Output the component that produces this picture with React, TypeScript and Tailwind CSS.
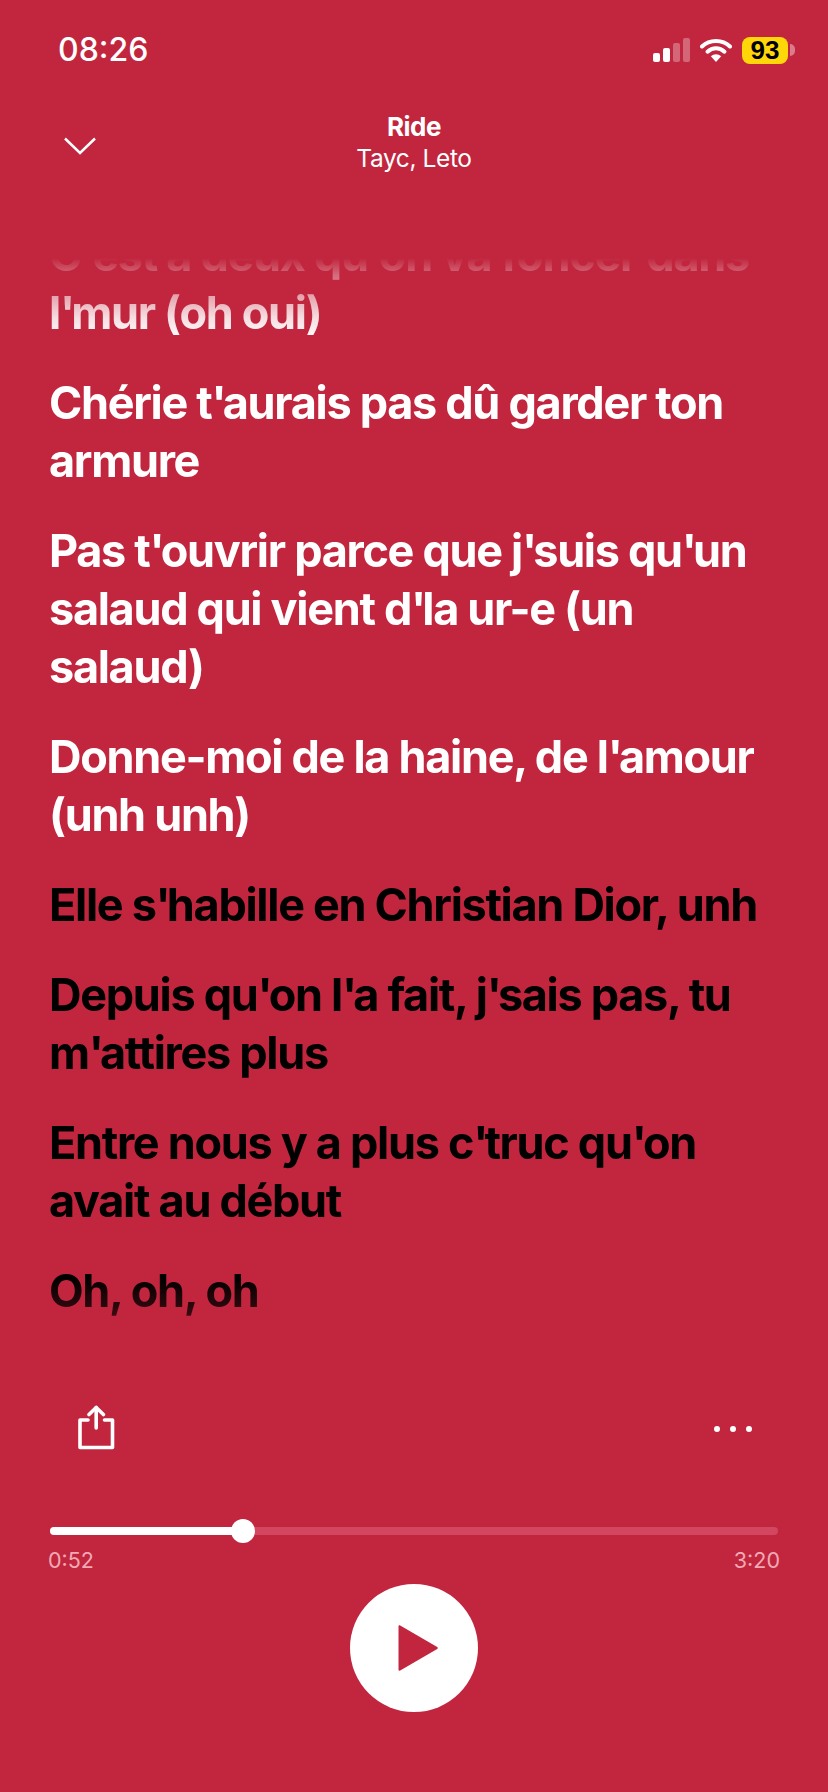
const lyrics: { lines: string[]; sung: boolean }[] = [
  { lines: ["C'est à deux qu'on va foncer dans", "l'mur (oh oui)"], sung: true },
  { lines: ["Chérie t'aurais pas dû garder ton", "armure"], sung: true },
  { lines: ["Pas t'ouvrir parce que j'suis qu'un", "salaud qui vient d'la ur-e (un", "salaud)"], sung: true },
  { lines: ["Donne-moi de la haine, de l'amour", "(unh unh)"], sung: true },
  { lines: ["Elle s'habille en Christian Dior, unh"], sung: false },
  { lines: ["Depuis qu'on l'a fait, j'sais pas, tu", "m'attires plus"], sung: false },
  { lines: ["Entre nous y a plus c'truc qu'on", "avait au début"], sung: false },
  { lines: ["Oh, oh, oh"], sung: false },
];

function StatusBar() {
  return (
    <div className="h-[76px] pt-6 pl-[58px] pr-[33px] flex items-center justify-between shrink-0">
      <span className="text-[32px] leading-none font-medium text-white font-['Inter',sans-serif]">08:26</span>
      <div className="flex items-center">
        <div className="flex items-end gap-[3px] h-[23px]">
          <div className="w-[7px] h-[9px] rounded-[2px] bg-white" />
          <div className="w-[7px] h-[14px] rounded-[2px] bg-white" />
          <div className="w-[7px] h-[19px] rounded-[2px] bg-white/30" />
          <div className="w-[7px] h-[24px] rounded-[2px] bg-white/30" />
        </div>
        <svg className="ml-[10px]" width="32" height="24" viewBox="0 0 32 24" fill="none">
          <path d="M2 8.5C9.5 1.2 22.5 1.2 30 8.5" stroke="white" strokeWidth="4" strokeLinecap="round" />
          <path d="M7.5 13.7C12.5 9 19.5 9 24.5 13.7" stroke="white" strokeWidth="4" strokeLinecap="round" />
          <path d="M16 24L10.8 18.3C13.8 15.5 18.2 15.5 21.2 18.3L16 24Z" fill="white" />
        </svg>
        <div className="ml-[10px] w-[46px] h-[27px] rounded-[8px] bg-[#ffd60a] flex items-center justify-center text-[26px] leading-none font-bold text-black font-['Liberation_Sans',sans-serif]">
          93
        </div>
        <div className="ml-[2px] w-[5px] h-[12px] rounded-r-full bg-white/40" />
      </div>
    </div>
  );
}

function Header() {
  return (
    <div className="h-[182px] grid grid-cols-[1fr_auto_1fr] items-start shrink-0">
      <svg className="ml-[64px] mt-[61px]" width="32" height="18" viewBox="0 0 32 18" fill="none" stroke="white" strokeWidth="2.5">
        <path d="M1 1.5L16 16L31 1.5" />
      </svg>
      <div className="pt-[35px] flex flex-col items-center text-white font-['Inter',sans-serif]">
        <span className="text-[26px] leading-[32px] font-bold tracking-[-0.5px]">Ride</span>
        <span className="text-[24.5px] leading-[31px] tracking-[-0.4px]">Tayc, Leto</span>
      </div>
    </div>
  );
}

// the app's font sets apostrophes tighter than Inter does
function LyricLine({ text }: { text: string }) {
  const parts = text.split("'");
  return (
    <div className="whitespace-nowrap">
      {parts.map((part, i) => (
        <span key={i}>
          {part}
          {i < parts.length - 1 && <span className="tracking-[-4px]">'</span>}
        </span>
      ))}
    </div>
  );
}

function Lyrics() {
  return (
    <div className="h-[1060px] shrink-0 overflow-hidden px-[49px] [mask-image:linear-gradient(to_bottom,transparent_0px,rgba(0,0,0,0.3)_16px,rgba(0,0,0,0.85)_60px,black_82px,black_1020px,rgba(0,0,0,0.68)_1060px)]">
      <div className="-mt-[32px] flex flex-col gap-[32px] font-['Inter',sans-serif] text-[45px] leading-[58px] font-bold tracking-[-1.3px]">
        {lyrics.map((block) => (
          <div key={block.lines[0]} className={block.sung ? "text-white" : "text-black"}>
            {block.lines.map((line) => (
              <LyricLine key={line} text={line} />
            ))}
          </div>
        ))}
      </div>
    </div>
  );
}

function Actions() {
  return (
    <div className="h-[209px] pt-[87px] pl-[78px] pr-[76px] flex items-start justify-between shrink-0">
      <svg width="37" height="45" viewBox="0 0 37 45" fill="none" stroke="white" strokeWidth="3.6" strokeLinecap="round" strokeLinejoin="round">
        <path d="M10 15H2V42.5H34.5V15H26.5" />
        <path d="M18.2 23V2.5" />
        <path d="M11 9.5L18.2 2.5L25.4 9.5" />
      </svg>
      <div className="flex gap-[10px] mt-[21px]">
        <div className="size-[6px] rounded-full bg-white" />
        <div className="size-[6px] rounded-full bg-white" />
        <div className="size-[6px] rounded-full bg-white" />
      </div>
    </div>
  );
}

function Progress() {
  return (
    <div className="px-[50px] shrink-0">
      <div className="relative h-[8px] rounded-full bg-[#d2465f]">
        <div className="h-full w-[193px] rounded-full bg-white" />
        <div className="absolute left-[181px] -top-[8px] size-[24px] rounded-full bg-white" />
      </div>
      <div className="mt-[13px] -mx-[2px] flex justify-between text-[21.5px] leading-[24px] text-[#f2a9b5] font-['Inter',sans-serif]">
        <span>0:52</span>
        <span>3:20</span>
      </div>
    </div>
  );
}

export default function App() {
  return (
    <div className="w-[828px] h-[1792px] flex flex-col overflow-hidden bg-[#c1263e]">
      <StatusBar />
      <Header />
      <Lyrics />
      <Actions />
      <Progress />
      <div className="mt-[12px] flex justify-center">
        <button className="size-[128px] rounded-full bg-white flex items-center justify-center">
          <svg className="ml-[8px]" width="40" height="46" viewBox="0 0 40 46" fill="#c1263e">
            <path d="M0.5 1.5C0.5 0.5 1.4 0 2.2 0.4L39.2 22C40 22.5 40 23.5 39.2 24L2.2 45.6C1.4 46 0.5 45.5 0.5 44.5Z" />
          </svg>
        </button>
      </div>
    </div>
  );
}
